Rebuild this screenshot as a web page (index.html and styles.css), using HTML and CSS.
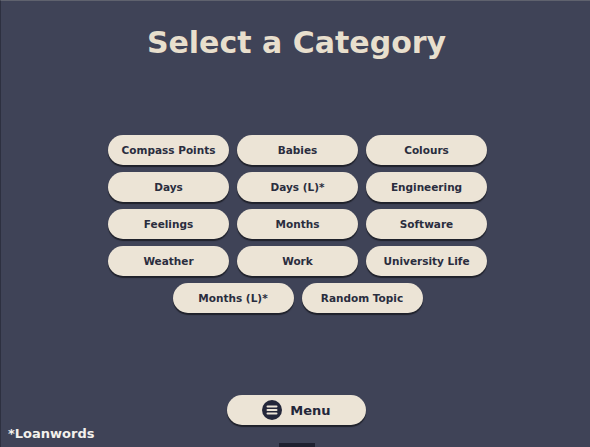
FILE: index.html
```html
<!DOCTYPE html>
<html lang="en">
<head>
<meta charset="utf-8">
<title>Select a Category</title>
<link rel="stylesheet" href="styles.css">
</head>
<body>
<main class="screen">
  <h1 class="title">Select a Category</h1>
  <div class="cats">
    <button class="cat">Compass Points</button>
    <button class="cat">Babies</button>
    <button class="cat">Colours</button>
    <button class="cat">Days</button>
    <button class="cat">Days (L)*</button>
    <button class="cat">Engineering</button>
    <button class="cat">Feelings</button>
    <button class="cat">Months</button>
    <button class="cat">Software</button>
    <button class="cat">Weather</button>
    <button class="cat">Work</button>
    <button class="cat">University Life</button>
    <button class="cat">Months (L)*</button>
    <button class="cat">Random Topic</button>
  </div>
  <button class="menu">
    <svg class="menu-icon" width="20" height="20" viewBox="0 0 20 20" aria-hidden="true">
      <circle cx="10" cy="10" r="10" fill="#24273a"/>
      <rect x="4.5" y="5.5" width="11" height="2" rx="1" fill="#ede5d7"/>
      <rect x="4.5" y="9" width="11" height="2" rx="1" fill="#ede5d7"/>
      <rect x="4.5" y="12.5" width="11" height="2" rx="1" fill="#ede5d7"/>
    </svg>
    <span>Menu</span>
  </button>
  <p class="note">*Loanwords</p>
  <div class="tab"></div>
</main>
</body>
</html>
```
FILE: styles.css
```css
html, body {
  margin: 0;
  padding: 0;
}
body {
  background: #3f4357;
}
.screen {
  box-sizing: border-box;
  width: 590px;
  height: 447px;
  overflow: hidden;
  display: flex;
  flex-direction: column;
  background: #3f4357;
  border-top: 1px solid #5f626e;
  border-left: 1px solid #2d3040;
  font-family: "DejaVu Sans", "Noto Sans", sans-serif;
}
.title {
  margin: 22px 0 0;
  padding-left: 2px;
  text-align: center;
  font-size: 30px;
  line-height: 40px;
  font-weight: bold;
  color: #e8dfcd;
}
.cats {
  width: 379px;
  margin: 72px 0 0 107px;
  display: flex;
  flex-wrap: wrap;
  justify-content: center;
  gap: 7px 8px;
}
.cat, .menu {
  border: 0;
  padding: 0;
  background: #ece4d6;
  color: #2a2d3e;
  font-family: inherit;
  font-weight: bold;
  box-shadow: 0 2px 1px rgba(0, 0, 0, 0.5);
}
.cat {
  width: 121px;
  height: 30px;
  border-radius: 15px;
  font-size: 10.5px;
}
.menu {
  width: 139px;
  height: 30px;
  margin: 82px 0 0 226px;
  border-radius: 15px;
  display: flex;
  align-items: center;
  justify-content: center;
  gap: 8px;
  font-size: 13px;
  color: #24273a;
}
.menu-icon {
  display: block;
}
.note {
  margin: 0 0 0 7px;
  font-size: 13px;
  line-height: 17px;
  font-weight: bold;
  color: #f3f1ec;
}
.tab {
  width: 36px;
  height: 4px;
  margin: auto 0 0 278px;
  background: #1f2130;
}
```
